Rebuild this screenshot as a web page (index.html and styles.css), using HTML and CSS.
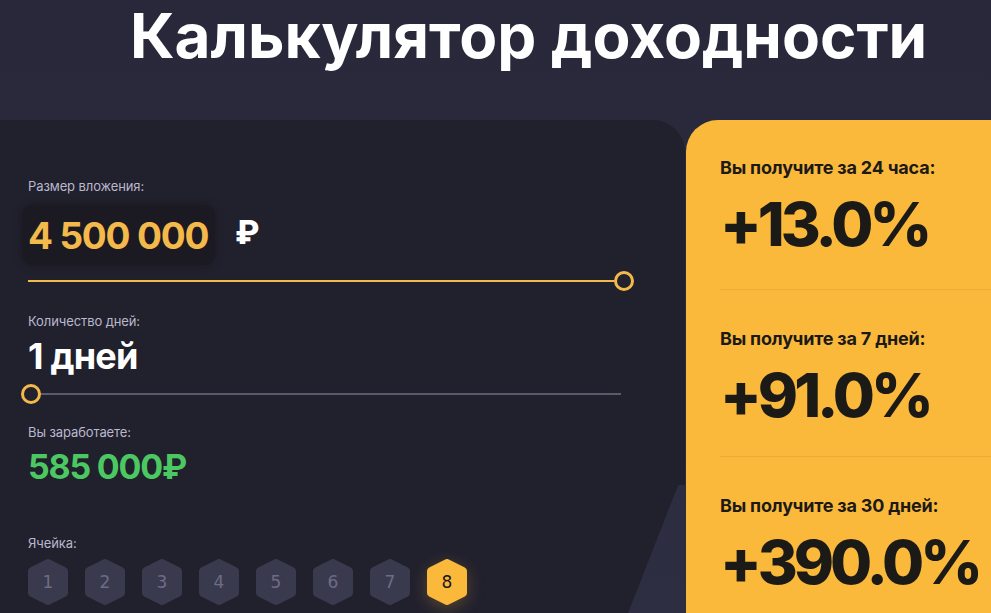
FILE: index.html
```html
<!DOCTYPE html>
<html lang="ru">
<head>
<meta charset="utf-8">
<title>Калькулятор доходности</title>
<link rel="stylesheet" href="styles.css">
</head>
<body>
<div class="page">
  <h1 class="title">Калькулятор доходности</h1>
  <div class="main">
    <section class="calc">
      <div class="label label-invest">Размер вложения:</div>
      <div class="value-row">
        <div class="value-box">4 500 000</div>
        <div class="currency">₽</div>
      </div>
      <div class="slider slider-full">
        <div class="track"></div>
        <div class="thumb"></div>
      </div>

      <div class="label label-days">Количество дней:</div>
      <div class="days">1 дней</div>
      <div class="slider slider-start">
        <div class="thumb"></div>
        <div class="track track-grey"></div>
      </div>

      <div class="label label-earn">Вы заработаете:</div>
      <div class="earn">585 000₽</div>

      <div class="label label-cell">Ячейка:</div>
      <div class="cells">
        <div class="cell"><svg viewBox="0 0 42 46"><path d="M21 4 L37 12 L37 34 L21 42 L5 34 L5 12 Z"/></svg><span>1</span></div>
        <div class="cell"><svg viewBox="0 0 42 46"><path d="M21 4 L37 12 L37 34 L21 42 L5 34 L5 12 Z"/></svg><span>2</span></div>
        <div class="cell"><svg viewBox="0 0 42 46"><path d="M21 4 L37 12 L37 34 L21 42 L5 34 L5 12 Z"/></svg><span>3</span></div>
        <div class="cell"><svg viewBox="0 0 42 46"><path d="M21 4 L37 12 L37 34 L21 42 L5 34 L5 12 Z"/></svg><span>4</span></div>
        <div class="cell"><svg viewBox="0 0 42 46"><path d="M21 4 L37 12 L37 34 L21 42 L5 34 L5 12 Z"/></svg><span>5</span></div>
        <div class="cell"><svg viewBox="0 0 42 46"><path d="M21 4 L37 12 L37 34 L21 42 L5 34 L5 12 Z"/></svg><span>6</span></div>
        <div class="cell"><svg viewBox="0 0 42 46"><path d="M21 4 L37 12 L37 34 L21 42 L5 34 L5 12 Z"/></svg><span>7</span></div>
        <div class="cell cell-active"><svg viewBox="0 0 42 46"><path d="M21 4 L37 12 L37 34 L21 42 L5 34 L5 12 Z"/></svg><span>8</span></div>
      </div>
    </section>
    <section class="results">
      <div class="result result-first">
        <div class="result-label">Вы получите за 24 часа:</div>
        <div class="result-value">+13.0%</div>
      </div>
      <div class="result">
        <div class="result-label">Вы получите за 7 дней:</div>
        <div class="result-value">+91.0%</div>
      </div>
      <div class="result result-last">
        <div class="result-label">Вы получите за 30 дней:</div>
        <div class="result-value">+390.0%</div>
      </div>
    </section>
  </div>
</div>
</body>
</html>
```
FILE: styles.css
```css
* { box-sizing: border-box; }
html, body { margin: 0; padding: 0; }
body {
  width: 991px;
  height: 613px;
  overflow: hidden;
  background: linear-gradient(180deg, #28283a 0%, #2e2e42 100%);
  font-family: Inter, "Noto Sans", sans-serif;
  color: #fff;
}
.page { display: flex; flex-direction: column; }
.title {
  margin: 0;
  height: 120px;
  padding: 3px 0 0 130px;
  font-size: 62px;
  line-height: 66px;
  font-weight: 700;
  letter-spacing: 0;
  color: #ffffff;
  white-space: nowrap;
}
.main {
  display: flex;
  gap: 1px;
  height: 493px;
}
.calc {
  flex: none;
  width: 685px;
  background: #21202d;
  border-top-right-radius: 32px;
  padding: 58px 0 0 28px;
  clip-path: polygon(0 0, 100% 0, 100% 365px, 99% 365px, 91.7% 100%, 0 100%);
}
.label {
  font-size: 13px;
  line-height: 16px;
  color: #b9b8cc;
  letter-spacing: -0.1px;
}
.value-row {
  display: flex;
  align-items: center;
  margin-top: 11px;
  margin-left: -6px;
  height: 60px;
}
.value-box {
  height: 60px;
  padding: 0 6px;
  width: 193px;
  display: flex;
  align-items: center;
  white-space: nowrap;
  background: #1b1a23;
  border-radius: 10px;
  box-shadow: 0 0 10px rgba(0,0,0,0.25);
  font-size: 37px;
  font-weight: 700;
  color: #f3b94a;
  letter-spacing: -1.2px;
}
.currency {
  margin-left: 20px;
  margin-top: -6px;
  font-size: 32px;
  font-weight: 800;
  color: #fff;
}
.slider {
  display: flex;
  align-items: center;
  height: 20px;
}
.slider-full { margin-top: 6px; width: 606px; }
.slider-start { margin-top: 8px; margin-left: -7px; width: 600px; }
.track {
  flex: 1;
  height: 2px;
  background: #f3b94a;
}
.track-grey { background: #5b5a6c; }
.thumb {
  width: 20px;
  height: 20px;
  border-radius: 50%;
  border: 3px solid #f3b94a;
  background: #22212d;
  flex: none;
}
.label-days { margin-top: 22px; }
.days {
  margin-top: 7px;
  font-size: 36px;
  line-height: 40px;
  font-weight: 700;
  letter-spacing: -0.8px;
  color: #fff;
}
.label-earn { margin-top: 20px; }
.earn {
  margin-top: 7px;
  font-size: 34px;
  line-height: 40px;
  font-weight: 700;
  letter-spacing: -1.2px;
  color: #4cc862;
}
.label-cell { margin-top: 48px; }
.cells {
  display: flex;
  gap: 15px;
  margin-top: 8px;
  margin-left: -1px;
}
.cell {
  display: grid;
  width: 42px;
  height: 46px;
  place-items: center;
}
.cell svg, .cell span { grid-area: 1 / 1; }
.cell svg { width: 42px; height: 46px; }
.cell path {
  fill: #3a3a4e;
  stroke: #3a3a4e;
  stroke-width: 8;
  stroke-linejoin: round;
}
.cell span {
  font-family: "DejaVu Sans", sans-serif;
  font-size: 17px;
  color: #6d6c86;
  position: relative;
}
.cell-active svg { filter: drop-shadow(0 4px 8px rgba(251,185,56,0.25)); }
.cell-active path { fill: #fbb93b; stroke: #fbb93b; }
.cell-active span { color: #17161c; }

.results {
  flex: 1;
  min-width: 0;
  overflow: hidden;
  background: #fbb93b;
  border-top-left-radius: 32px;
  padding-left: 34px;
}
.result {
  height: 167px;
  border-bottom: 1px solid #eeab33;
  padding-top: 38px;
}
.result-first { height: 170px; padding-top: 37px; }
.result-last { border-bottom: none; }
.result-label {
  font-size: 18px;
  line-height: 22px;
  font-weight: 700;
  color: #1c1a17;
  letter-spacing: -0.2px;
  white-space: nowrap;
}
.result-value {
  margin-top: 13px;
  font-size: 61px;
  line-height: 64px;
  font-weight: 800;
  color: #1c1a17;
  letter-spacing: -4px;
  white-space: nowrap;
}
```
